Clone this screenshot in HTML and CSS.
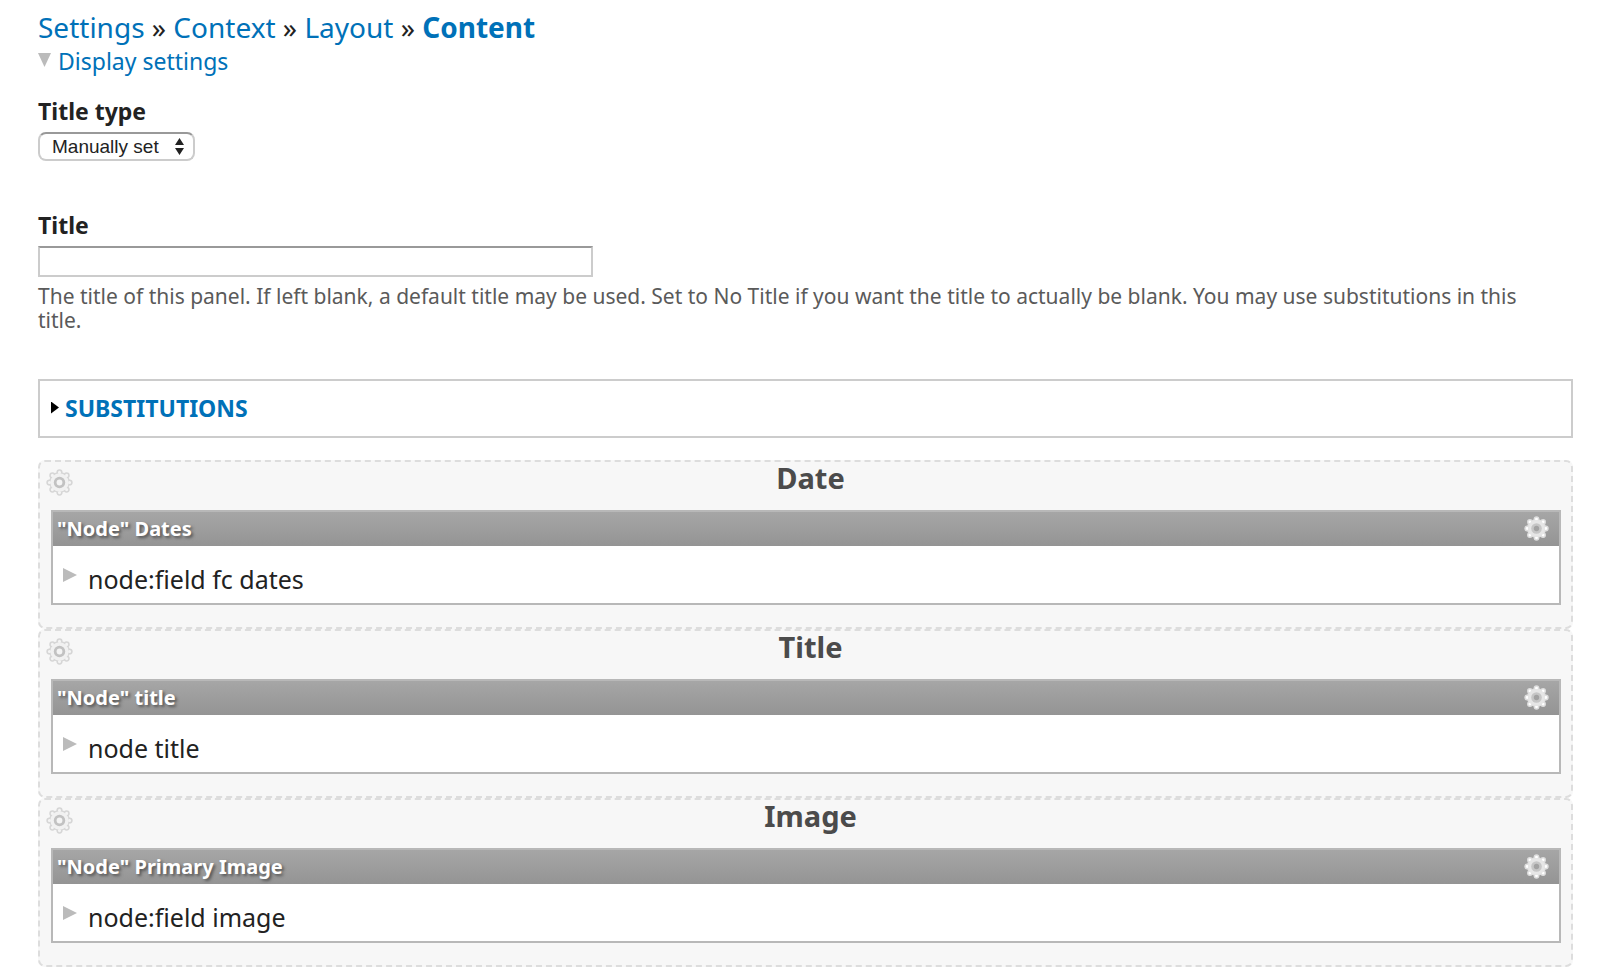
FILE: index.html
```
<!DOCTYPE html>
<html lang="en">
<head>
    <meta charset="UTF-8">
    <meta name="viewport" content="width=device-width, initial-scale=1.0">
    <title>Content</title>
    <link rel="stylesheet" href="styles.css">
</head>
<body>

<!-- Shared gear shape, the teeth are round dashes -->
<svg class="sprite" aria-hidden="true">
    <symbol id="gear" viewBox="0 0 26 26">
        <circle class="teeth-line" cx="13" cy="13" r="9.7" pathLength="80"/>
        <circle class="body-line" cx="13" cy="13" r="10"/>
        <circle class="teeth" cx="13" cy="13" r="9.7" pathLength="80"/>
        <circle class="body" cx="13" cy="13" r="8.8"/>
        <circle class="ring" cx="13" cy="13" r="5.5"/>
        <circle class="hole" cx="13" cy="13" r="2.8"/>
    </symbol>
</svg>

<div class="page">
    <nav class="breadcrumb">
        <a href="#">Settings</a> » <a href="#">Context</a> » <a href="#">Layout</a> » <a href="#" class="active">Content</a>
    </nav>
    <div class="display-settings">
        <span class="arrow-down"></span>
        <a href="#">Display settings</a>
    </div>

    <form>
        <div class="form-item">
            <label for="title-type">Title type</label>
            <div class="select-wrap">
                <select id="title-type">
                    <option>Manually set</option>
                    <option>No title</option>
                </select>
                <svg class="select-arrows" viewBox="0 0 9 17" aria-hidden="true">
                    <path d="M4.5 0 L9 7 H0 Z M0 10 H9 L4.5 17 Z"/>
                </svg>
            </div>
        </div>
        <div class="form-item">
            <label for="title">Title</label>
            <input type="text" id="title">
            <p class="description">The title of this panel. If left blank, a default title may be used. Set to No Title if you want the title to actually be blank. You may use substitutions in this title.</p>
        </div>
        <div class="fieldset">
            <span class="arrow-black"></span>
            <a href="#">SUBSTITUTIONS</a>
        </div>
    </form>

    <!-- Panel regions -->
    <section class="region">
        <button class="gear" aria-label="Region settings"><svg><use href="#gear"/></svg></button>
        <h2>Date</h2>
        <div class="pane">
            <div class="pane-title">
                <span>"Node" Dates</span>
                <button class="gear" aria-label="Pane settings"><svg><use href="#gear"/></svg></button>
            </div>
            <div class="pane-content">
                <span class="arrow-right"></span>
                <span>node:field fc dates</span>
            </div>
        </div>
    </section>
    <section class="region">
        <button class="gear" aria-label="Region settings"><svg><use href="#gear"/></svg></button>
        <h2>Title</h2>
        <div class="pane">
            <div class="pane-title">
                <span>"Node" title</span>
                <button class="gear" aria-label="Pane settings"><svg><use href="#gear"/></svg></button>
            </div>
            <div class="pane-content">
                <span class="arrow-right"></span>
                <span>node title</span>
            </div>
        </div>
    </section>
    <section class="region">
        <button class="gear" aria-label="Region settings"><svg><use href="#gear"/></svg></button>
        <h2>Image</h2>
        <div class="pane">
            <div class="pane-title">
                <span>"Node" Primary Image</span>
                <button class="gear" aria-label="Pane settings"><svg><use href="#gear"/></svg></button>
            </div>
            <div class="pane-content">
                <span class="arrow-right"></span>
                <span>node:field image</span>
            </div>
        </div>
    </section>
</div>

</body>
</html>
```
FILE: styles.css
```
* {
    box-sizing: border-box;
}
body {
    margin: 0;
    background: #fff;
    color: #222;
    font-family: "Lucida Grande", "Noto Sans", sans-serif;
    font-size: 23px;
    line-height: 34px;
}
a {
    color: #0071b8;
    text-decoration: none;
}
.sprite {
    display: block;
    width: 0;
    height: 0;
}
.page {
    padding: 10px 27px 14px 38px;
}
.breadcrumb {
    font-size: 28px;
}
.breadcrumb .active {
    font-weight: bold;
}
.display-settings {
    display: flex;
    gap: 7px;
    margin-bottom: 16px;
}
.arrow-down {
    margin-top: 9px;
    width: 13px;
    height: 14px;
    background: #bbb;
    clip-path: polygon(0 0, 100% 0, 50% 100%);
}
.form-item {
    margin-bottom: 47px;
}
.form-item label {
    display: block;
    margin-bottom: 4px;
    font-weight: bold;
}
.select-wrap {
    position: relative;
    width: 157px;
}
select {
    display: block;
    width: 100%;
    height: 29px;
    padding: 0 28px 0 12px;
    appearance: none;
    background: #fff;
    border: 2px solid #ccc;
    border-top-color: #999;
    border-radius: 8px;
    color: #222;
    font-family: "Liberation Sans", sans-serif;
    font-size: 19px;
}
.select-arrows {
    position: absolute;
    top: 6px;
    right: 11px;
    width: 9px;
    height: 17px;
    fill: #222;
    pointer-events: none;
}
input {
    display: block;
    width: 555px;
    height: 31px;
    padding: 2px 6px;
    background: #fff;
    border: 2px solid #ccc;
    border-top-color: #999;
    font-size: 19px;
}
.description {
    margin: 7px 0 0;
    padding-right: 22px;
    color: #5a5a5a;
    font-size: 21px;
    line-height: 24px;
}
.fieldset {
    display: flex;
    align-items: center;
    gap: 6px;
    height: 59px;
    margin-bottom: 22px;
    padding: 0 11px 2px;
    border: 2px solid #ccc;
    font-weight: bold;
}
.arrow-black {
    width: 8px;
    height: 12px;
    background: #000;
    clip-path: polygon(0 0, 100% 50%, 0 100%);
}
.region {
    position: relative;
    padding: 0 10px 22px 11px;
    background: #f7f7f7;
    border: 2px dashed #ddd;
    border-radius: 7px;
}
.region h2 {
    margin: 0 0 16px;
    padding-left: 9px;
    color: #4b4b4b;
    font-size: 29px;
    line-height: 32px;
    text-align: center;
}
.gear {
    padding: 0;
    background: none;
    border: none;
    cursor: pointer;
}
.gear svg {
    display: block;
    width: 100%;
    height: 100%;
}
.teeth-line,
.teeth {
    fill: none;
    stroke-linecap: round;
    stroke-dasharray: 0 10;
}
.teeth-line {
    stroke: var(--line);
    stroke-width: 6;
}
.teeth {
    stroke: var(--teeth);
    stroke-width: 3;
}
.body-line {
    fill: var(--line);
}
.body {
    fill: var(--body);
}
.ring {
    fill: var(--ring);
}
.hole {
    fill: var(--hole);
}
.region > .gear {
    --line: #d6d6d6;
    --teeth: #f4f4f4;
    --body: #f1f1f1;
    --ring: #c2c2c2;
    --hole: #f4f4f4;
    position: absolute;
    top: 7px;
    left: 6px;
    width: 27px;
    height: 27px;
}
.pane {
    background: #fff;
    border: 2px solid #b8b8b8;
}
.pane-title {
    display: flex;
    justify-content: space-between;
    align-items: center;
    height: 34px;
    padding: 0 10px 0 4px;
    background: linear-gradient(#a6a6a6, #949494);
    color: #fff;
    font-size: 20px;
    font-weight: bold;
    text-shadow: 2px 2px 3px #555;
}
.pane-title .gear {
    --line: #dedede;
    --teeth: #fff;
    --body: #e6e6e6;
    --ring: #c6c6c6;
    --hole: #a2a2a2;
    width: 25px;
    height: 25px;
    margin-bottom: 2px;
}
.pane-content {
    display: flex;
    gap: 11px;
    padding: 16px 10px 7px;
    font-size: 25px;
}
.arrow-right {
    margin-top: 6px;
    width: 14px;
    height: 14px;
    background: #bbb;
    clip-path: polygon(0 0, 100% 50%, 0 100%);
}
```
